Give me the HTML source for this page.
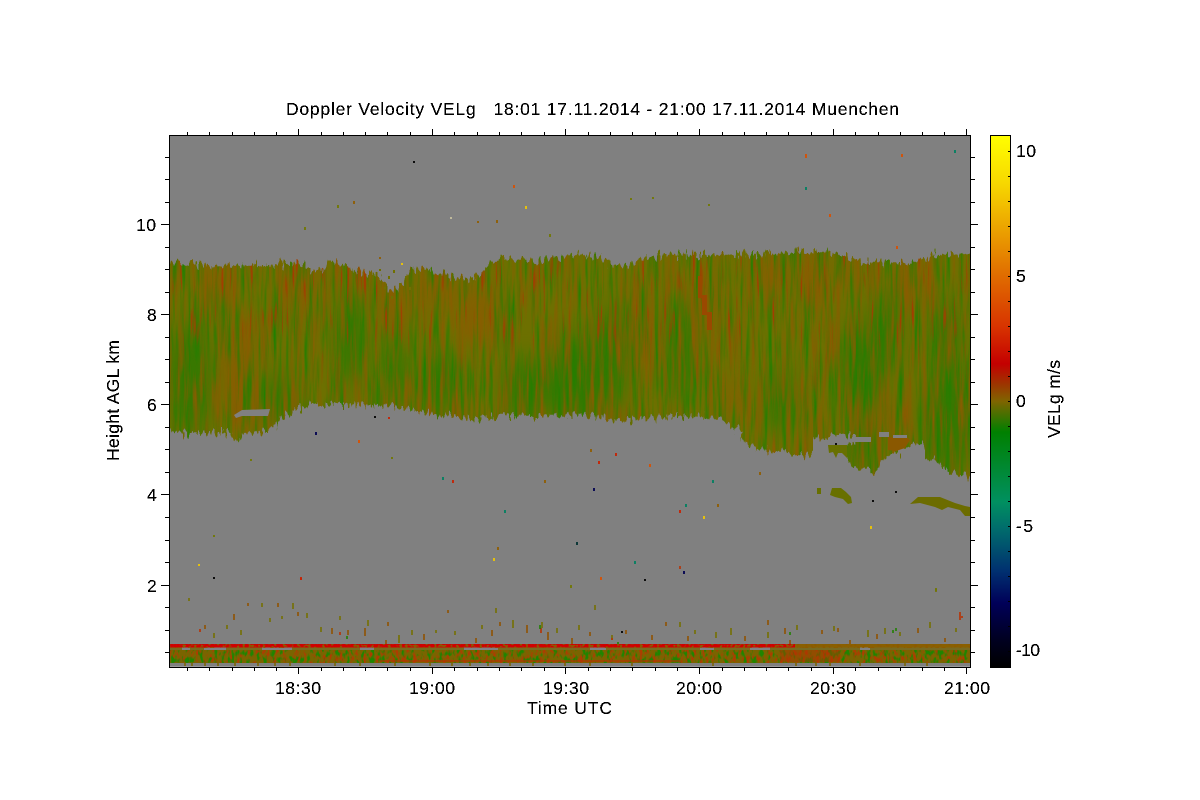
<!DOCTYPE html>
<html><head><meta charset="utf-8"><title>Doppler Velocity</title>
<style>html,body{margin:0;padding:0;background:#fff;width:1200px;height:800px;overflow:hidden}svg{display:block}text{font-family:"Liberation Sans",sans-serif;font-size:17.5px;fill:#000}</style></head><body>
<svg width="1200" height="800" viewBox="0 0 1200 800" xmlns="http://www.w3.org/2000/svg">
<defs>
<linearGradient id="cb" gradientUnits="userSpaceOnUse" x1="0" y1="135" x2="0" y2="667">
<stop offset="0" stop-color="#ffff00"/><stop offset=".09" stop-color="#f7d800"/><stop offset=".265" stop-color="#e06c00"/><stop offset=".36" stop-color="#d83400"/><stop offset=".43" stop-color="#c40000"/><stop offset=".465" stop-color="#a03000"/><stop offset=".5" stop-color="#806400"/><stop offset=".558" stop-color="#008000"/><stop offset=".69" stop-color="#009060"/><stop offset=".74" stop-color="#006c6c"/><stop offset=".82" stop-color="#003070"/><stop offset=".88" stop-color="#000058"/><stop offset=".95" stop-color="#000020"/><stop offset="1" stop-color="#000"/>
</linearGradient>
<linearGradient id="topfade" gradientUnits="userSpaceOnUse" x1="0" y1="250" x2="0" y2="480">
<stop offset="0" stop-color="#fff"/><stop offset=".3" stop-color="#fff"/><stop offset=".5" stop-color="#444"/><stop offset="1" stop-color="#222"/>
</linearGradient>
<mask id="tm" maskUnits="userSpaceOnUse" x="160" y="240" width="820" height="290"><rect x="160" y="240" width="820" height="290" fill="url(#topfade)"/></mask>
<clipPath id="plot"><rect x="170" y="136" width="800" height="531"/></clipPath>
<filter id="j" filterUnits="userSpaceOnUse" x="160" y="240" width="820" height="290" color-interpolation-filters="sRGB"><feTurbulence type="fractalNoise" baseFrequency="0.33 0.09" numOctaves="2" seed="7"/><feColorMatrix values="1 0 0 0 0  0 0 0 0 .5  0 0 0 0 0  0 0 0 0 1" result="n"/><feDisplacementMap in="SourceGraphic" in2="n" scale="20" xChannelSelector="G" yChannelSelector="R"/></filter>
<mask id="cl" maskUnits="userSpaceOnUse" x="160" y="240" width="820" height="290"><path fill="#fff" filter="url(#j)" d="M160 264L205 264 215 267 232 265 265 266 272 264 298 263 305 267 318 272 326 268 328 257 333 257 335 262 345 265 352 270 365 272 380 277 388 288 393 292 398 288 404 280 412 268 440 272 458 279 470 278 482 273 490 264 500 256 520 262 540 260 560 258 580 254 600 258 610 263 625 266 640 261 665 254 700 255 760 254 795 252 830 252 850 258 870 263 900 263 915 262 930 256 980 252L980 478 970 477 957 473 943 468 933 459 925 458 925 445 913 443 900 452 893 452 882 462 877 471 853 468 847 458 847 445 855 443 856 436 813 436 813 452 808 456 793 455 787 452 763 450 748 445 740 438 743 431 730 426 720 418 700 416 660 417 620 421 580 414 555 417 530 417 500 417 475 420 450 414 420 412 385 406 345 405 310 405 300 408 290 412 280 420 272 428 265 432 242 433 237 443 232 433 185 433 170 430 160 430Z"/></mask>
<filter id="blur" filterUnits="userSpaceOnUse" x="100" y="200" width="950" height="350" color-interpolation-filters="sRGB"><feGaussianBlur stdDeviation="8 14"/></filter>
<filter id="sg" filterUnits="userSpaceOnUse" x="165" y="245" width="810" height="240" color-interpolation-filters="sRGB"><feTurbulence type="fractalNoise" baseFrequency="0.22 0.014" numOctaves="3" seed="4"/><feColorMatrix values="0 0 0 0 .12  0 0 0 0 .50  0 0 0 0 0  2.4 0 0 0 -1.05"/></filter>
<filter id="sb" filterUnits="userSpaceOnUse" x="165" y="245" width="810" height="240" color-interpolation-filters="sRGB"><feTurbulence type="fractalNoise" baseFrequency="0.22 0.016" numOctaves="3" seed="11"/><feColorMatrix values="0 0 0 0 .54  0 0 0 0 .36  0 0 0 0 0  2.4 0 0 0 -1.05"/></filter>
<filter id="sr" filterUnits="userSpaceOnUse" x="165" y="245" width="810" height="240" color-interpolation-filters="sRGB"><feTurbulence type="fractalNoise" baseFrequency="0.28 0.02" numOctaves="2" seed="23"/><feColorMatrix values="0 0 0 0 .64  0 0 0 0 .24  0 0 0 0 0  6 0 0 0 -3.9"/></filter>
<filter id="bg" filterUnits="userSpaceOnUse" x="170" y="650" width="800" height="13" color-interpolation-filters="sRGB"><feTurbulence type="fractalNoise" baseFrequency="0.28 0.14" numOctaves="2" seed="5"/><feColorMatrix values="0 0 0 0 .12  0 0 0 0 .52  0 0 0 0 0  5 0 0 0 -2.5"/></filter>
<filter id="bb" filterUnits="userSpaceOnUse" x="170" y="650" width="800" height="13" color-interpolation-filters="sRGB"><feTurbulence type="fractalNoise" baseFrequency="0.3 0.16" numOctaves="2" seed="9"/><feColorMatrix values="0 0 0 0 .68  0 0 0 0 .24  0 0 0 0 0  6 0 0 0 -3"/></filter>
<filter id="rl" filterUnits="userSpaceOnUse" x="170" y="644" width="800" height="4" color-interpolation-filters="sRGB"><feTurbulence type="fractalNoise" baseFrequency="0.35 0.4" numOctaves="1" seed="3"/><feColorMatrix values="0 0 0 0 .55  0 0 0 0 .35  0 0 0 0 0  9 0 0 0 -4.6"/></filter>
<filter id="a" x="-2%" y="-20%" width="104%" height="140%"><feComponentTransfer><feFuncA type="discrete" tableValues="0 1 1"/></feComponentTransfer></filter>
</defs>
<rect width="1200" height="800" fill="#fff"/>
<rect x="170" y="136" width="800" height="531" fill="#808080"/>
<g clip-path="url(#plot)">
 <g mask="url(#cl)">
  <rect x="160" y="245" width="820" height="240" fill="#6d7000"/>
  <g filter="url(#blur)" opacity=".8">
   <g fill="#2a7a00">
    <ellipse cx="190" cy="380" rx="22" ry="55"/><ellipse cx="350" cy="340" rx="14" ry="45"/><ellipse cx="280" cy="400" rx="18" ry="25"/>
    <ellipse cx="575" cy="380" rx="30" ry="45"/><ellipse cx="610" cy="360" rx="18" ry="50"/><ellipse cx="525" cy="390" rx="24" ry="30"/>
    <ellipse cx="680" cy="350" rx="14" ry="50"/><ellipse cx="780" cy="400" rx="16" ry="30"/><ellipse cx="860" cy="370" rx="22" ry="45"/><ellipse cx="885" cy="330" rx="14" ry="40"/>
    <ellipse cx="950" cy="420" rx="28" ry="50"/><ellipse cx="945" cy="340" rx="14" ry="40"/><ellipse cx="440" cy="380" rx="18" ry="30"/><ellipse cx="860" cy="450" rx="18" ry="18"/><ellipse cx="395" cy="370" rx="12" ry="30"/>
   </g>
   <g fill="#8a5c00">
    <ellipse cx="238" cy="370" rx="16" ry="55"/><ellipse cx="215" cy="285" rx="22" ry="20"/><ellipse cx="300" cy="285" rx="22" ry="22"/><ellipse cx="395" cy="300" rx="12" ry="38"/>
    <ellipse cx="438" cy="290" rx="24" ry="20"/><ellipse cx="480" cy="310" rx="20" ry="30"/><ellipse cx="640" cy="330" rx="12" ry="45"/><ellipse cx="705" cy="300" rx="14" ry="35"/>
    <ellipse cx="815" cy="285" rx="14" ry="30"/><ellipse cx="815" cy="425" rx="10" ry="22"/><ellipse cx="880" cy="420" rx="30" ry="14"/><ellipse cx="910" cy="285" rx="22" ry="20"/>
    <ellipse cx="470" cy="410" rx="18" ry="8"/><ellipse cx="620" cy="420" rx="18" ry="8"/><ellipse cx="850" cy="270" rx="12" ry="18"/><ellipse cx="775" cy="275" rx="22" ry="16"/><ellipse cx="260" cy="420" rx="22" ry="10"/><ellipse cx="735" cy="400" rx="14" ry="18"/>
   </g>
  </g>
  <rect x="160" y="245" width="820" height="240" filter="url(#sg)"/>
  <rect x="160" y="245" width="820" height="240" filter="url(#sb)"/>
  <g mask="url(#tm)"><rect x="160" y="245" width="820" height="240" filter="url(#sr)"/></g>
  <g fill="#9a4800"><rect x="698" y="276" width="4" height="22"/><rect x="702" y="295" width="5" height="20"/><rect x="707" y="312" width="5" height="18"/></g>
 </g>
 <g fill="#808080"><path d="M242 410L270 409 268 416 242 416 236 418 234 415Z"/><rect x="855" y="437" width="16" height="5"/><rect x="879" y="432" width="10" height="5"/><rect x="893" y="435" width="14" height="3"/></g>
 <path fill="#8a5800" d="M888 437H892V438H907V437L910 440 905 448 896 451 888 450Z"/>
 <g fill="#687000">
  <path d="M828 445H847V458L842 453 838 453 836 458 833 452 829 453Z"/>
  <path d="M817 488H821V494H817Z"/>
  <path d="M832 488H841L846 492 851 497 852 503 848 504 843 499 835 497 830 495Z"/>
  <path d="M910 504L918 497 940 497 955 503 965 506 970 507V516L965 516 960 510 948 507 942 510 935 507 920 503Z" fill="#6c6c00"/>
 </g>
 <path stroke="#707000" stroke-width="2" fill="none" d="M380 269v2M389 276v3M394 270v3M400 283v3M392 296v3M406 276v2M410 287v3M385 287v2"/>
 <!-- bottom band -->
 <rect x="170" y="644" width="800" height="19" fill="#7a6400"/>
 <rect x="170" y="647" width="800" height="3" fill="#786a20"/>
 <path stroke="#808080" stroke-width="3" fill="none" d="M182 648.5h8M204 648.5h22M262 648.5h30M360 648.5h14M464 648.5h34M590 648.5h16M700 648.5h14M750 648.5h20M860 648.5h10"/>
 <rect x="170" y="650" width="800" height="13" filter="url(#bb)"/>
 <rect x="170" y="650" width="800" height="13" filter="url(#bg)"/>
 <rect x="170" y="644" width="625" height="3.5" fill="#d00000"/>
 <rect x="795" y="644" width="175" height="3.5" fill="#8a6000"/>
 <rect x="170" y="644" width="800" height="4" filter="url(#rl)"/>
 <rect x="380" y="660" width="300" height="2" fill="#b83000" opacity=".6"/>
 <rect x="780" y="650" width="60" height="12" fill="#b03000" opacity=".45"/>
 <rect x="170" y="663" width="800" height="3" fill="#808080"/>
 <rect x="170" y="666" width="800" height="1" fill="#9a9a9a"/>
 <path stroke="#7a6400" stroke-width="1.5" d="M185 663v3M192 663v3M205 663v3M218 663v3M235 663v3M258 663v3M275 663v3M290 663v3M335 663v3M360 663v3M395 663v3M430 663v3M452 663v3M470 663v3M488 663v3M510 663v3M533 663v3M565 663v3M590 663v3M632 663v3M713 663v3M796 663v3M816 663v3M830 663v3M860 663v3M905 663v3M927 663v3"/>
 <!-- spikes above band -->
 <path stroke="#757000" stroke-width="1.6" fill="none" d="M189 598v3M214 633v5M227 625v4M241 630v5M262 603v4M270 618v4M282 616v3M293 603v6M307 613v5M321 627v5M340 616v4M368 620v6M399 635v8M412 630v5M436 630v3M455 631v4M482 625v4M496 608v5M513 620v8M542 622v6M557 628v5M579 625v5M595 605v5M612 635v5M680 622v5M695 630v4M716 632v6M731 628v7M768 632v6M797 625v5M834 626v5M868 630v7M885 628v6M900 632v4M930 622v6M936 589v3M956 628v4"/>
 <path stroke="#905200" stroke-width="1.6" fill="none" d="M205 625v4M234 614v6M248 603v3M278 603v4M298 612v4M332 628v6M348 630v5M365 628v8M386 640v4M388 622v4M424 634v6M448 610v3M476 638v5M492 630v6M500 622v4M527 625v8M548 632v8M572 638v6M590 632v4M626 630v4M652 635v5M666 622v4M688 636v5M745 636v5M768 620v5M785 628v6M790 640v4M822 630v4M838 628v4M850 640v4M877 634v5M918 628v5M945 638v4"/>
 <path stroke="#b83000" stroke-width="1.6" fill="none" d="M200 629v3M301 578v2M340 632v3M541 628v5M612 638v2M960 612v8M962 616v2M680 566v3"/>
 <path stroke="#208000" stroke-width="1.6" fill="none" d="M540 625v4M347 636v3M618 642v2M790 632v3M893 630v3M896 628v3"/>
 <!-- sprinkled pixels -->
 <g stroke-width="1.8" fill="none">
  <path stroke="#000" d="M414 161v2M375 416v2M836 443v2M896 491v2M873 500v2M214 577v2M645 579v2M622 631v2"/>
  <path stroke="#000050" d="M316 432v3M594 488v3M684 571v3"/>
  <path stroke="#f0c800" d="M526 206v3M402 263v2M871 526v3M704 516v3M494 558v3M199 564v2"/>
  <path stroke="#c8c0a0" d="M451 217v2"/>
  <path stroke="#d85000" d="M806 154v4M902 154v3M514 185v3M830 214v3M359 440v3M650 464v3M601 577v3M897 246v3"/>
  <path stroke="#c82000" d="M599 461v3M616 453v3M453 480v3M680 510v3M301 577v3M389 417v2"/>
  <path stroke="#008060" d="M955 150v3M806 187v3M443 477v3M713 480v3M686 504v3M505 510v3M635 561v3"/>
  <path stroke="#003030" d="M577 542v3"/>
  <path stroke="#707800" d="M338 205v3M305 227v3M631 198v2M550 234v3M709 204v2M251 459v2M392 457v2M571 585v3M936 588v3M214 535v2M653 197v2"/>
  <path stroke="#905c00" d="M354 201v3M497 220v3M478 221v2M380 257v2M591 449v3M760 472v3M545 480v3M718 504v3M498 547v3"/>
 </g>
</g>
<!-- axes -->
<g fill="none" stroke="#000" stroke-width="1" shape-rendering="crispEdges">
 <rect x="169.5" y="135.5" width="801" height="532"/>
 <path d="M161 224.5H169M161 314.5H169M161 404.5H169M161 494.5H169M161 585.5H169"/>
 <path d="M970 224.5H978M970 314.5H978M970 404.5H978M970 494.5H978M970 585.5H978"/>
 <path d="M165 157.5H169M165 179.5H169M165 202.5H169M165 247.5H169M165 269.5H169M165 292.5H169M165 337.5H169M165 359.5H169M165 382.5H169M165 427.5H169M165 449.5H169M165 472.5H169M165 517.5H169M165 540.5H169M165 562.5H169M165 607.5H169M165 630.5H169M165 652.5H169"/>
 <path d="M971 157.5H975M971 179.5H975M971 202.5H975M971 247.5H975M971 269.5H975M971 292.5H975M971 337.5H975M971 359.5H975M971 382.5H975M971 427.5H975M971 449.5H975M971 472.5H975M971 517.5H975M971 540.5H975M971 562.5H975M971 607.5H975M971 630.5H975M971 652.5H975"/>
 <path d="M298.5 129V135M432.5 129V135M565.5 129V135M699.5 129V135M833.5 129V135M966.5 129V135"/>
 <path d="M298.5 668V674M432.5 668V674M565.5 668V674M699.5 668V674M833.5 668V674M966.5 668V674"/>
 <path d="M187.5 132V135M209.5 132V135M232.5 132V135M254.5 132V135M276.5 132V135M321.5 132V135M343.5 132V135M365.5 132V135M387.5 132V135M410.5 132V135M454.5 132V135M477.5 132V135M499.5 132V135M521.5 132V135M544.5 132V135M588.5 132V135M610.5 132V135M632.5 132V135M655.5 132V135M677.5 132V135M722.5 132V135M744.5 132V135M766.5 132V135M788.5 132V135M811.5 132V135M855.5 132V135M878.5 132V135M900.5 132V135M922.5 132V135M944.5 132V135"/>
 <path d="M187.5 668V671M209.5 668V671M232.5 668V671M254.5 668V671M276.5 668V671M321.5 668V671M343.5 668V671M365.5 668V671M387.5 668V671M410.5 668V671M454.5 668V671M477.5 668V671M499.5 668V671M521.5 668V671M544.5 668V671M588.5 668V671M610.5 668V671M632.5 668V671M655.5 668V671M677.5 668V671M722.5 668V671M744.5 668V671M766.5 668V671M788.5 668V671M811.5 668V671M855.5 668V671M878.5 668V671M900.5 668V671M922.5 668V671M944.5 668V671"/>
</g>
<!-- colorbar -->
<rect x="990" y="135" width="20" height="532" fill="url(#cb)"/>
<g fill="none" stroke="#000" stroke-width="1" shape-rendering="crispEdges">
 <rect x="990.5" y="135.5" width="20" height="532"/>
 <path d="M1008 151.5H1010M1008 176.5H1010M1008 201.5H1010M1008 226.5H1010M1008 251.5H1010M1008 276.5H1010M1008 301.5H1010M1008 326.5H1010M1008 351.5H1010M1008 376.5H1010M1008 401.5H1010M1008 426.5H1010M1008 451.5H1010M1008 476.5H1010M1008 501.5H1010M1008 526.5H1010M1008 551.5H1010M1008 576.5H1010M1008 601.5H1010M1008 626.5H1010M1008 651.5H1010"/>
</g>
<!-- text -->
<g filter="url(#a)">
 <text x="286" y="115" textLength="613" lengthAdjust="spacing" xml:space="preserve">Doppler Velocity VELg   18:01 17.11.2014 - 21:00 17.11.2014 Muenchen</text>
</g>
<g filter="url(#a)">
 <text x="136" y="231" textLength="20">10</text><text x="147" y="321">8</text><text x="147" y="411">6</text><text x="147" y="501">4</text><text x="147" y="592">2</text>
</g>
<g filter="url(#a)">
 <text x="275" y="694" textLength="46">18:30</text><text x="409" y="694" textLength="46">19:00</text><text x="543" y="694" textLength="46">19:30</text><text x="676" y="694" textLength="46">20:00</text><text x="810" y="694" textLength="46">20:30</text><text x="944" y="694" textLength="46">21:00</text>
 <text x="527" y="714" textLength="85">Time UTC</text>
 <text x="1016" y="157" textLength="20">10</text><text x="1016" y="282">5</text><text x="1016" y="407">0</text><text x="1016" y="532" textLength="17">-5</text><text x="1016" y="656" textLength="24">-10</text>
</g>
<g filter="url(#a)"><text transform="translate(119 461) rotate(-90)" textLength="121">Height AGL km</text></g>
<g filter="url(#a)"><text transform="translate(1060 438) rotate(-90)" textLength="78">VELg m/s</text></g>
</svg>
</body></html>
